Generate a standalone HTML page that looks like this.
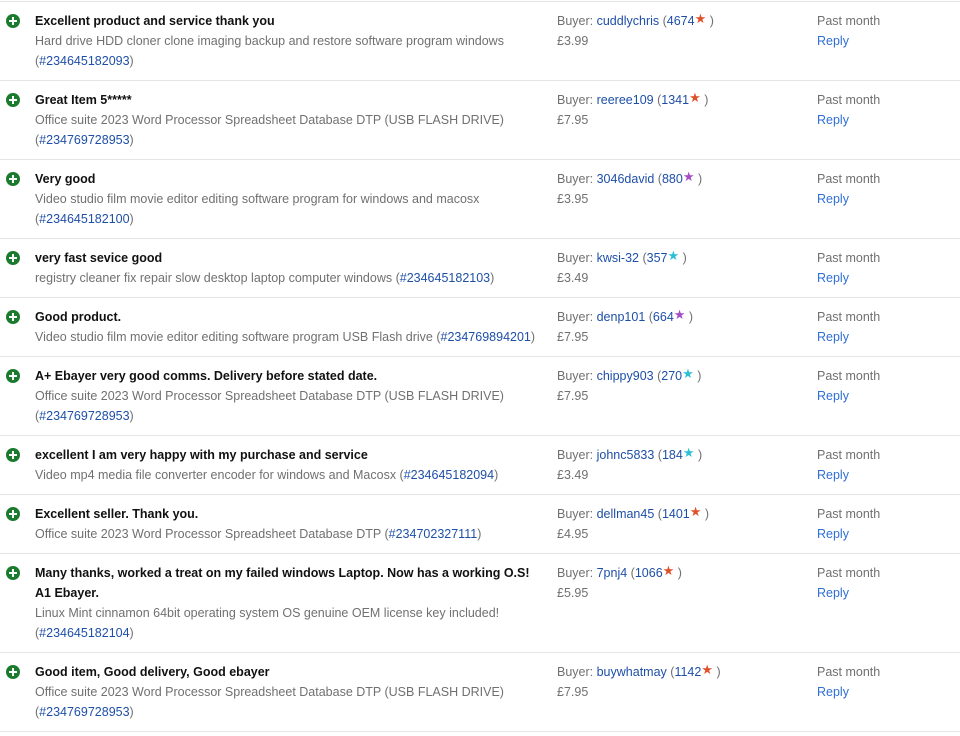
<!DOCTYPE html>
<html><head><style>
body{margin:0;background:#fff;font-family:"Liberation Sans",Arial,sans-serif;font-size:12.5px;color:#707070;width:960px;overflow:hidden}
.wrap{border-top:1px solid #e5e5e5;margin-top:1px}
.row{position:relative;border-bottom:1px solid #e5e5e5;padding:9px 0 9px 0;line-height:20px}
.ic{position:absolute;left:6px;top:12px;width:14px;height:14px;border-radius:50%;background:#1a7a2e}
.ic:before{content:"";position:absolute;left:3px;top:6px;width:8px;height:2px;background:#fff}
.ic:after{content:"";position:absolute;left:6px;top:3px;width:2px;height:8px;background:#fff}
.c1{margin-left:35px;width:510px}
.c1 b{color:#111;font-weight:bold}
.c2{position:absolute;left:557px;top:9px}
.c3{position:absolute;left:817px;top:9px}
a{color:#1e4fa8;text-decoration:none}
.rp{color:#2f6fd6}
.s{font-size:13px;position:relative;top:-2px}
.r{color:#e0502b}.p{color:#a64bc8}.t{color:#2bbfd6}
</style></head><body><div class="wrap">
<div class="row"><span class="ic"></span><div class="c1"><b>Excellent product and service thank you</b><br>Hard drive HDD cloner clone imaging backup and restore software program windows<br>(<a>#234645182093</a>)</div><div class="c2">Buyer: <a>cuddlychris</a> (<a>4674</a><span class="s r">★</span> )<br>£3.99</div><div class="c3">Past month<br><a class="rp">Reply</a></div></div>
<div class="row"><span class="ic"></span><div class="c1"><b>Great Item 5*****</b><br>Office suite 2023 Word Processor Spreadsheet Database DTP (USB FLASH DRIVE)<br>(<a>#234769728953</a>)</div><div class="c2">Buyer: <a>reeree109</a> (<a>1341</a><span class="s r">★</span> )<br>£7.95</div><div class="c3">Past month<br><a class="rp">Reply</a></div></div>
<div class="row"><span class="ic"></span><div class="c1"><b>Very good</b><br>Video studio film movie editor editing software program for windows and macosx<br>(<a>#234645182100</a>)</div><div class="c2">Buyer: <a>3046david</a> (<a>880</a><span class="s p">★</span> )<br>£3.95</div><div class="c3">Past month<br><a class="rp">Reply</a></div></div>
<div class="row"><span class="ic"></span><div class="c1"><b>very fast sevice good</b><br>registry cleaner fix repair slow desktop laptop computer windows (<a>#234645182103</a>)</div><div class="c2">Buyer: <a>kwsi-32</a> (<a>357</a><span class="s t">★</span> )<br>£3.49</div><div class="c3">Past month<br><a class="rp">Reply</a></div></div>
<div class="row"><span class="ic"></span><div class="c1"><b>Good product.</b><br>Video studio film movie editor editing software program USB Flash drive (<a>#234769894201</a>)</div><div class="c2">Buyer: <a>denp101</a> (<a>664</a><span class="s p">★</span> )<br>£7.95</div><div class="c3">Past month<br><a class="rp">Reply</a></div></div>
<div class="row"><span class="ic"></span><div class="c1"><b>A+ Ebayer very good comms. Delivery before stated date.</b><br>Office suite 2023 Word Processor Spreadsheet Database DTP (USB FLASH DRIVE)<br>(<a>#234769728953</a>)</div><div class="c2">Buyer: <a>chippy903</a> (<a>270</a><span class="s t">★</span> )<br>£7.95</div><div class="c3">Past month<br><a class="rp">Reply</a></div></div>
<div class="row"><span class="ic"></span><div class="c1"><b>excellent I am very happy with my purchase and service</b><br>Video mp4 media file converter encoder for windows and Macosx (<a>#234645182094</a>)</div><div class="c2">Buyer: <a>johnc5833</a> (<a>184</a><span class="s t">★</span> )<br>£3.49</div><div class="c3">Past month<br><a class="rp">Reply</a></div></div>
<div class="row"><span class="ic"></span><div class="c1"><b>Excellent seller. Thank you.</b><br>Office suite 2023 Word Processor Spreadsheet Database DTP (<a>#234702327111</a>)</div><div class="c2">Buyer: <a>dellman45</a> (<a>1401</a><span class="s r">★</span> )<br>£4.95</div><div class="c3">Past month<br><a class="rp">Reply</a></div></div>
<div class="row"><span class="ic"></span><div class="c1"><b>Many thanks, worked a treat on my failed windows Laptop. Now has a working O.S!<br>A1 Ebayer.</b><br>Linux Mint cinnamon 64bit operating system OS genuine OEM license key included!<br>(<a>#234645182104</a>)</div><div class="c2">Buyer: <a>7pnj4</a> (<a>1066</a><span class="s r">★</span> )<br>£5.95</div><div class="c3">Past month<br><a class="rp">Reply</a></div></div>
<div class="row"><span class="ic"></span><div class="c1"><b>Good item, Good delivery, Good ebayer</b><br>Office suite 2023 Word Processor Spreadsheet Database DTP (USB FLASH DRIVE)<br>(<a>#234769728953</a>)</div><div class="c2">Buyer: <a>buywhatmay</a> (<a>1142</a><span class="s r">★</span> )<br>£7.95</div><div class="c3">Past month<br><a class="rp">Reply</a></div></div>
</div></body></html>
